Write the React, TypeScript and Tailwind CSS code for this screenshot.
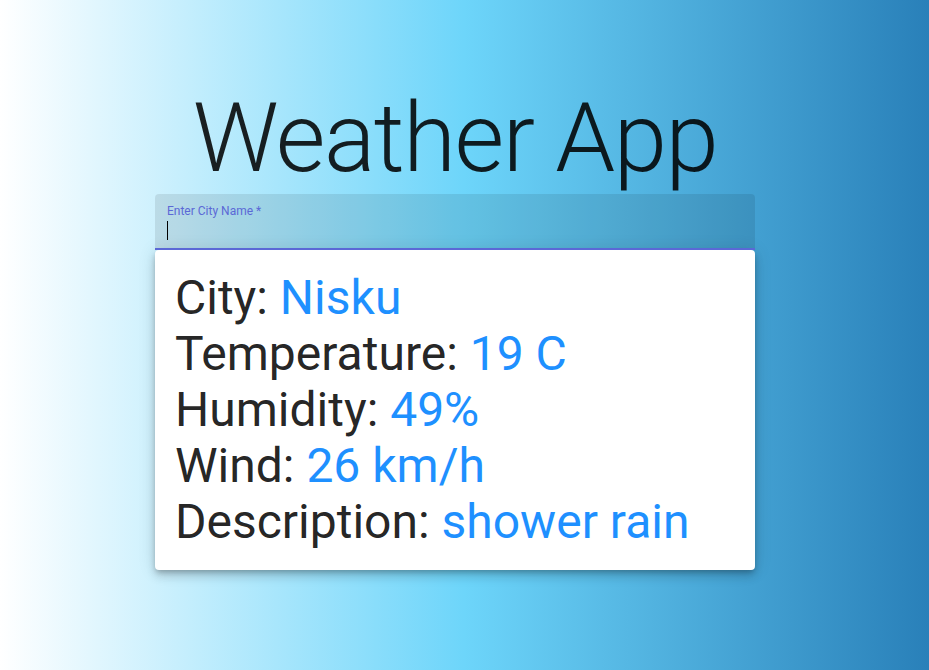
import React from 'react';

const ROWS: { label: string; value: string }[] = [
  { label: 'City', value: 'Nisku' },
  { label: 'Temperature', value: '19 C' },
  { label: 'Humidity', value: '49%' },
  { label: 'Wind', value: '26 km/h' },
  { label: 'Description', value: 'shower rain' },
];

export default function App() {
  return (
    <div
      className="min-h-screen w-full bg-[linear-gradient(to_right,#ffffff,#6dd5fa,#2980b9)] flex justify-center pr-[19px]"
      style={{ fontFamily: 'Roboto, "Helvetica Neue", Arial, sans-serif' }}
    >
      <div className="w-[600px] pt-[82px] flex flex-col">
        <h1 className="text-center text-[96px] leading-[112px] font-light tracking-[-1.5px] text-black/[0.87]">
          Weather App
        </h1>

        <div className="relative h-[56px] rounded-t-[4px] bg-black/[0.09] border-b-2 border-[#5b68d6]">
          <label className="absolute left-[12px] top-[10px] text-[12px] leading-[14px] text-[#5b68d6]">
            Enter City Name *
          </label>
          <span className="absolute left-[12px] top-[27px] w-px h-[19px] bg-black" />
        </div>

        <div className="bg-white rounded-[4px] px-[20px] py-[20px] shadow-[0_3px_5px_-1px_rgba(0,0,0,0.2),0_6px_10px_0_rgba(0,0,0,0.14),0_1px_18px_0_rgba(0,0,0,0.12)]">
          {ROWS.map((r) => (
            <div key={r.label} className="text-[48px] leading-[56px] font-normal text-black/[0.87]">
              {r.label}: <span className="text-[#1e90ff]">{r.value}</span>
            </div>
          ))}
        </div>
      </div>
    </div>
  );
}
